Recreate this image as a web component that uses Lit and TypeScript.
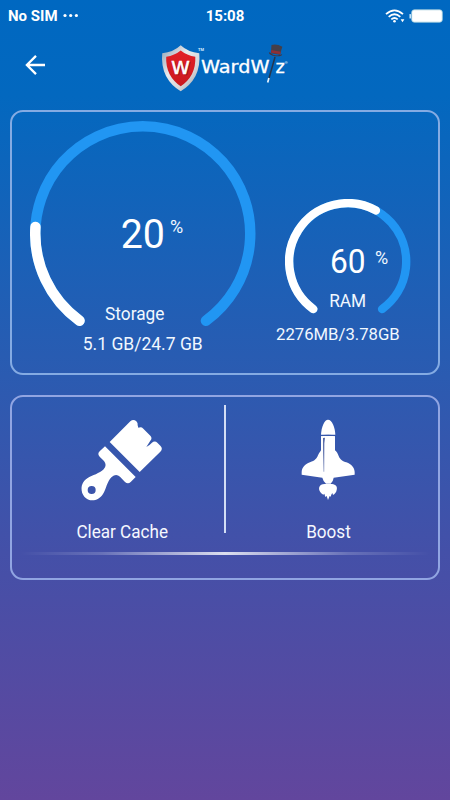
import { LitElement, html, svg, css } from "lit";
import { customElement, property } from "lit/decorators.js";

@customElement("status-bar")
class StatusBar extends LitElement {
  static styles = css`
    :host { display: flex; height: 32px; align-items: center; padding: 0 7px 0 8px; box-sizing: border-box; color: #fff; }
    .side { flex: 1; display: flex; align-items: center; }
    .right { justify-content: flex-end; gap: 4px; }
    .carrier, .time { font: 700 15px/18px Roboto, sans-serif; }
    .time { margin-right: 1px; }
    .dots { margin-left: 5px; }
  `;
  render() {
    return html`
      <div class="side">
        <span class="carrier">No SIM</span>
        <svg class="dots" width="16" height="6" viewBox="0 0 16 6" fill="#fff">
          <circle cx="2" cy="2.500" r="1.600" /><circle cx="7.700" cy="2.500" r="1.600" /><circle cx="13.400" cy="2.500" r="1.600" />
        </svg>
      </div>
      <span class="time">15:08</span>
      <div class="side right">
        <svg width="20" height="16" viewBox="0 0 20 16" fill="none" stroke="#fff" stroke-width="1.800">
          <path d="M1 6.200Q9.500 -1.500 18 6.200" /><path d="M3.700 8.900Q9.500 3.600 15.300 8.900" /><path d="M6.300 11.400Q9.500 8.500 12.700 11.400" />
          <circle cx="9.500" cy="13.200" r="1.300" fill="#fff" stroke="none" />
          <path d="M15.600 11.300h3.800L17.500 14.200z" fill="#fff" stroke="none" />
        </svg>
        <svg width="34" height="14" viewBox="0 0 34 14">
          <rect x="2.700" y=".8" width="30.600" height="12.400" rx="2.600" fill="#fff" stroke="#9fcbdc" stroke-width=".8" />
          <rect x="0.500" y="5" width="1.400" height="4.500" rx=".6" fill="#dcf2ff" />
        </svg>
      </div>
    `;
  }
}

@customElement("brand-header")
class BrandHeader extends LitElement {
  static styles = css`
    :host { display: flex; height: 78px; box-sizing: border-box; padding: 9px 0 0 22px; }
    .back { margin-top: 12px; }
    .logo { margin-left: 110px; }
    .word { font: 400 17.200px "DejaVu Sans", sans-serif; fill: #fff; stroke: #fff; stroke-width: .3px; }
    .tiny { font: 700 4px Roboto, sans-serif; fill: #d5ecff; }
    .initial { font: 400 18.500px "DejaVu Sans", sans-serif; fill: #fff; stroke: #fff; stroke-width: .6px; }
    .shade { fill: #7c1015; stroke: #7c1015; opacity: .6; }
  `;
  render() {
    return html`
      <svg class="back" width="26" height="24" viewBox="0 0 26 24" fill="none" stroke="#fff" stroke-width="2.300">
        <path d="M23 12H5.500M14 2.900L4.900 12L14 21.100" />
      </svg>
      <svg class="logo" width="134" height="54" viewBox="158 41 134 54">
        <defs>
          <linearGradient id="silver" x1="0" x2="1" y2="1">
            <stop offset="0" stop-color="#8d9fb4" /><stop offset=".4" stop-color="#e9eaec" />
            <stop offset=".7" stop-color="#d5d5d8" /><stop offset="1" stop-color="#8e949f" />
          </linearGradient>
          <linearGradient id="red" x2="0" y2="1">
            <stop offset="0" stop-color="#e32027" /><stop offset="1" stop-color="#c9181f" />
          </linearGradient>
        </defs>
        <path d="M180.700 45.200Q188 52 199.300 53.300Q200.500 66 195.500 76Q190.500 85.500 180.700 91.200Q171 85.500 166 76Q161 66 162.200 53.300Q173.500 52 180.700 45.200Z" fill="url(#silver)" />
        <path d="M180.700 50.500Q187 55.600 195.300 56.800Q195.800 66 192 74Q188 81.500 180.700 86.300Q173.500 81.500 169.500 74Q165.700 66 166.200 56.800Q174.500 55.600 180.700 50.500Z" fill="url(#red)" />
        <text class="initial shade" x="172.200" y="74.500" textLength="18.500" lengthAdjust="spacingAndGlyphs" aria-hidden="true">W</text>
        <text class="initial" x="171.200" y="73.500" textLength="18.500" lengthAdjust="spacingAndGlyphs">W</text>
        <text class="tiny" x="198" y="50.500">TM</text>
        <text class="word" x="201" y="73.200" textLength="68.500" lengthAdjust="spacingAndGlyphs">WardW</text>
        <text class="word" x="275.500" y="73.200" textLength="9.300" lengthAdjust="spacingAndGlyphs">z</text>
        <text class="tiny" x="284.500" y="64">®</text>
        <path d="M275 57L268.500 80" stroke="#26364d" stroke-width="1.500" />
        <path d="M268.900 78L267.700 82.500" stroke="#e6f4ff" stroke-width="1.700" />
        <g transform="rotate(10 276 51)">
          <path d="M270.500 45.800Q276 43.600 281.500 45.800L280.500 54H271.300Z" fill="#453f48" />
          <path d="M271.200 50.800H281L280.700 53.500H271.400Z" fill="#8e3038" />
          <path d="M269.200 53.200Q276 57.500 282.600 53.200Q283 55.600 276 56.300Q269.300 56.300 269.200 53.200Z" fill="#49343d" />
        </g>
      </svg>
    `;
  }
}

@customElement("usage-gauge")
class UsageGauge extends LitElement {
  @property({ type: Number }) percent = 0;
  @property({ type: Number }) radius = 100;
  @property({ type: Number }) thickness = 10;
  @property({ type: Number }) valueSize = 40;
  @property({ type: Number }) valueY = 0;
  @property({ type: Number }) unitX = 0;
  @property({ type: Number }) unitY = 0;
  @property({ type: Number }) labelX = 0;
  @property({ type: Number }) labelY = 0;
  @property() label = "";

  static styles = css`
    :host { display: block; font-family: Roboto, sans-serif; }
    svg { display: block; }
    .value { fill: #fff; }
    .unit { font-size: 19px; fill: #f1f8ff; }
    .label { font-size: 18px; fill: #f1f8ff; }
    .track, .bar { fill: none; stroke-linecap: round; }
    .track { stroke: #2196f3; }
    .bar { stroke: #fff; }
  `;

  private arc(share: number) {
    const at = (deg: number) => {
      const a = (deg * Math.PI) / 180;
      return `${(-Math.sin(a) * this.radius).toFixed(2)} ${(Math.cos(a) * this.radius).toFixed(2)}`;
    };
    const sweep = 288 * share;
    return `M${at(36)}A${this.radius} ${this.radius} 0 ${sweep > 180 ? 1 : 0} 1 ${at(36 + sweep)}`;
  }

  render() {
    const outer = this.radius + this.thickness / 2;
    const height = outer + this.radius * 0.81 + this.thickness / 2 + 1;
    return html`
      <svg width=${outer * 2} height=${height} viewBox="${-outer} ${-outer} ${outer * 2} ${height}">
        ${svg`
          <path class="track" stroke-width=${this.thickness} d=${this.arc(1)} />
          <path class="bar" stroke-width=${this.thickness} d=${this.arc(this.percent / 100)} />
          <text class="value" font-size=${this.valueSize} transform="translate(0 ${this.valueY}) scale(.96 1)" text-anchor="middle">${this.percent}</text>
          <text class="unit" x=${this.unitX - 6.6} y=${this.unitY} textLength="13.200" lengthAdjust="spacingAndGlyphs">%</text>
          <text class="label" transform="translate(${this.labelX} ${this.labelY}) scale(.96 1)" text-anchor="middle">${this.label}</text>
        `}
      </svg>
    `;
  }
}

@customElement("app-root")
class AppRoot extends LitElement {
  static styles = css`
    :host {
      display: flex; flex-direction: column; width: 450px; height: 800px; overflow: hidden;
      background: linear-gradient(#0068c1 0%, #0368bf 12%, #2b5bb1 47%, #4450a8 69%, #62469d 100%);
      font-family: Roboto, sans-serif;
    }
    .card { box-sizing: border-box; margin: 0 10px; border: 2px solid #84abe3; border-radius: 13px; }
    .usage { height: 265px; display: flex; align-items: flex-start; padding: 9px 27px 0 18px; justify-content: space-between; }
    .meter { display: flex; flex-direction: column; align-items: center; }
    .detail { margin-top: 6px; font-size: 17.500px; line-height: 22px; color: #f1f8ff; white-space: nowrap; }
    .ram { margin-top: 78px; width: 126px; }
    .ram .detail { align-self: flex-start; margin: 9px 0 0 -9px; font-size: 17.400px; transform: scaleX(.96); transform-origin: left; }
    .tools { height: 185px; margin-top: 20px; padding: 8px 8px 0; border-color: #91a5e2; }
    .row { display: flex; height: 128px; }
    .divider { width: 2px; background: #d3def5; }
    .tool { flex: 1; display: flex; flex-direction: column; align-items: center; padding-top: 13px; }
    .tool svg { display: block; flex: none; }
    .name { margin-top: 19px; font-size: 18px; line-height: 22px; color: #f5f8ff; transform: scaleX(.95); }
    .glow { height: 3px; margin-top: 19px; background: linear-gradient(90deg, #fff0, #ffffff30 20%, #ffffffd0 50%, #ffffff30 80%, #fff0); }
  `;
  render() {
    return html`
      <status-bar></status-bar>
      <brand-header></brand-header>
      <section class="card usage">
        <div class="meter">
          <usage-gauge percent="20" .radius=${107.5} .thickness=${10.5} .valueSize=${41}
            .valueY=${14.2} .unitX=${33.9} .unitY=${-0.5} .labelX=${-8} .labelY=${86}
            label="Storage"></usage-gauge>
          <span class="detail">5.1 GB/24.7 GB</span>
        </div>
        <div class="meter ram">
          <usage-gauge percent="60" .radius=${58.5} .thickness=${8.4} .valueSize=${33}
            .valueY=${11.4} .unitX=${34} .unitY=${2.5} .labelX=${0} .labelY=${45}
            label="RAM"></usage-gauge>
          <span class="detail">2276MB/3.78GB</span>
        </div>
      </section>
      <section class="card tools">
        <div class="row">
          <div class="tool">
            <svg width="84" height="84" viewBox="30 24 252 252" fill="#fff">
              <path d="M119 96L181 34Q190 26 199 34Q205 40 203 46L205 53Q214 49 220 56L241 77Q248 84 241 92L229 111Q240 105 245 99Q254 91 262 98L271 107Q280 116 271 125L209 186Z" />
              <path fill-rule="evenodd" d="M105 109L197 201L182 216Q174 224 165 216L150 200Q138 189 125 201C111 214 109 236 99 252C85 275 57 276 43 260C29 243 33 216 52 205C68 195 88 191 101 178Q112 166 102 153L89 140Q81 132 89 124ZM65 228A12 12 0 1 0 65 252A12 12 0 1 0 65 228Z" />
            </svg>
            <span class="name">Clear Cache</span>
          </div>
          <div class="divider"></div>
          <div class="tool">
            <svg width="84" height="84" viewBox="16 24 252 252">
              <path fill="#fff" d="M121 74C122 51 131 29 142 29C154 29 163 51 164 74Z" />
              <path fill="#fff" d="M121 78H163V121C169 126 171 130 174 138C179 150 187 154 197 157C213 163 221 173 222 186V194L159 203Q158 213 150 221H136Q127 213 125 203L63 194V186C64 173 72 163 88 157C103 152 108 146 112 136C115 129 118 126 121 121Z" />
              <path fill="#fff" d="M132 222H154C166 223 171 231 168 240C167 248 162 252 157 255L155 249Q152 253 150 260L147 258L142 270L138 258L134 261L131 251L128 254C119 250 113 239 116 231Q119 222 132 222Z" />
              <path fill="none" stroke="#3b58a9" stroke-width="2" d="M122 77Q142 74 163 77" />
              <path fill="#5367a6" d="M127 84L133 83L131 100L130.500 185H129L127.500 130Z" />
            </svg>
            <span class="name">Boost</span>
          </div>
        </div>
        <div class="glow"></div>
      </section>
    `;
  }
}
